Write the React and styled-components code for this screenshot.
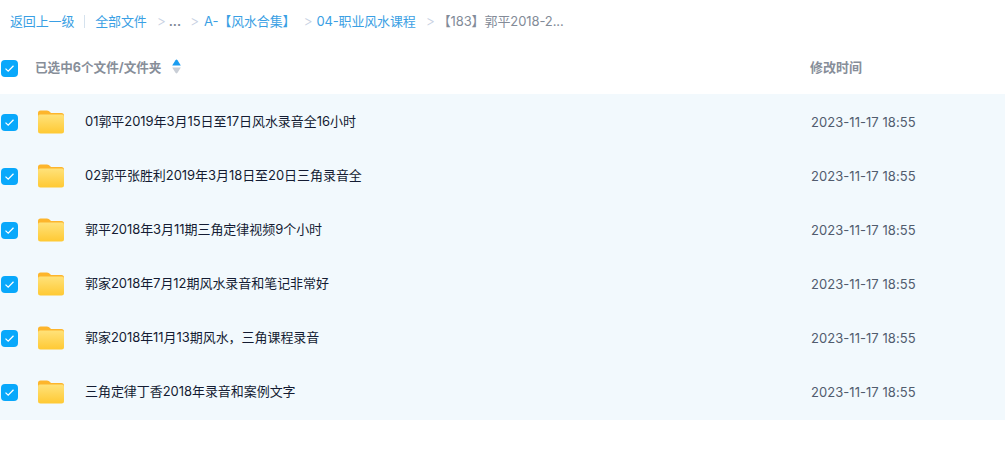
import React from "react";
import styled, { createGlobalStyle } from "styled-components";

const files = [
  "01郭平2019年3月15日至17日风水录音全16小时",
  "02郭平张胜利2019年3月18日至20日三角录音全",
  "郭平2018年3月11期三角定律视频9个小时",
  "郭家2018年7月12期风水录音和笔记非常好",
  "郭家2018年11月13期风水，三角课程录音",
  "三角定律丁香2018年录音和案例文字",
];

const Check = () => (
  <CheckBox>
    <svg width="11" height="9" viewBox="0 0 11 9" fill="none">
      <path d="M1.5 4.6 L4.2 7.2 L9.5 1.8" stroke="#fff" strokeWidth="1.3" />
    </svg>
  </CheckBox>
);

const FolderIcon = () => (
  <svg width="26" height="24" viewBox="0 0 26 24">
    <defs>
      <linearGradient id="folderFront" x1="0" y1="0" x2="0" y2="1">
        <stop offset="0" stopColor="#ffe27a" />
        <stop offset="1" stopColor="#ffc933" />
      </linearGradient>
    </defs>
    <path d="M0 3 Q0 0.5 2.5 0.5 L9 0.5 Q11 0.5 12 2 L13 3 L23.5 3 Q26 3 26 5.5 L26 10 L0 10 Z" fill="#fdb52c" />
    <path d="M0 6.5 Q0 4.5 2 4.5 L24 4.5 Q26 4.5 26 6.5 L26 21 Q26 23.5 23.5 23.5 L2.5 23.5 Q0 23.5 0 21 Z" fill="url(#folderFront)" />
  </svg>
);

const SortIcon = () => (
  <svg width="9" height="15" viewBox="0 0 9 15">
    <path d="M4.5 0.5 Q5 0.5 5.5 1.2 L8.8 6.5 L0.2 6.5 L3.5 1.2 Q4 0.5 4.5 0.5 Z" fill="#1a9cf0" />
    <path d="M0.2 8.5 L8.8 8.5 L5.5 13.8 Q4.5 15 3.5 13.8 Z" fill="#c9ced6" />
  </svg>
);

const App = () => (
  <Page>
    <GlobalStyle />
    <Crumbs>
      <CrumbLink>返回上一级</CrumbLink>
      <Divider />
      <CrumbLink>全部文件</CrumbLink>
      <Arrow $before={10} $after={5}>&gt;</Arrow>
      <Dots>...</Dots>
      <Arrow $before={9} $after={7}>&gt;</Arrow>
      <CrumbLink>A-【风水合集】</CrumbLink>
      <Arrow $before={8} $after={6}>&gt;</Arrow>
      <CrumbLink>04-职业风水课程</CrumbLink>
      <Arrow $before={10} $after={5}>&gt;</Arrow>
      <Current>【183】郭平2018-2...</Current>
    </Crumbs>
    <HeadRow>
      <Check />
      <HeadName>
        已选中6个文件/文件夹
        <SortIcon />
      </HeadName>
      <HeadTime>修改时间</HeadTime>
    </HeadRow>
    <List>
      {files.map((name) => (
        <Row key={name}>
          <Check />
          <FolderSlot>
            <FolderIcon />
          </FolderSlot>
          <FileName>{name}</FileName>
          <FileTime>2023-11-17 18:55</FileTime>
        </Row>
      ))}
    </List>
  </Page>
);

const GlobalStyle = createGlobalStyle`
  html, body {
    margin: 0;
    background: #fff;
  }
  body {
    font-family: Inter, "Noto Sans CJK SC", sans-serif;
    font-size: 13px;
  }
`;

const Page = styled.div`
  width: 1005px;
  height: 465px;
  overflow: hidden;
`;

const Crumbs = styled.div`
  display: flex;
  align-items: center;
  height: 41px;
  padding-left: 10px;
  white-space: nowrap;
`;

const CrumbLink = styled.span`
  color: #3a9fe4;
  letter-spacing: -0.15px;
`;

const Divider = styled.span`
  width: 1px;
  height: 13px;
  margin: 2px 10px 0;
  background: #d5e2ee;
`;

const Arrow = styled.span`
  width: 7px;
  margin: 0 ${(p) => p.$after}px 0 ${(p) => p.$before}px;
  color: #c6d0e2;
  font-size: 14px;
  font-weight: 300;
  text-align: center;
`;

const Dots = styled.span`
  color: #7c8694;
  font-weight: 600;
`;

const Current = styled.span`
  color: #838b98;
  letter-spacing: -0.1px;
`;

const HeadRow = styled.div`
  display: grid;
  grid-template-columns: 34px 775px 1fr;
  align-items: center;
  height: 53px;
  padding: 2px 0 0 1px;
  box-sizing: border-box;
`;

const HeadName = styled.div`
  display: flex;
  align-items: center;
  gap: 11px;
  padding-bottom: 4px;
  color: #878e99;
  font-size: 12.6px;
  font-weight: 700;
`;

const HeadTime = styled.div`
  padding-bottom: 4px;
  color: #878e99;
  font-size: 13px;
  font-weight: 700;
`;

const CheckBox = styled.span`
  display: flex;
  align-items: center;
  justify-content: center;
  width: 17px;
  height: 17px;
  border-radius: 4px;
  background: #09a8fb;
`;

const List = styled.div`
  padding: 1px 0;
  background: #f2f9fd;
`;

const Row = styled.div`
  display: grid;
  grid-template-columns: 37px 47px 726px 1fr;
  align-items: center;
  height: 54px;
  padding-left: 1px;
  box-sizing: border-box;
`;

const FolderSlot = styled.div`
  display: flex;
`;

const FileName = styled.div`
  padding-bottom: 4px;
  color: #141c33;
  font-size: 13px;
  letter-spacing: -0.05px;
  white-space: nowrap;
`;

const FileTime = styled.div`
  padding-bottom: 1px;
  color: #515c6e;
  font-size: 13px;
  letter-spacing: 0.05px;
`;

export default App;
